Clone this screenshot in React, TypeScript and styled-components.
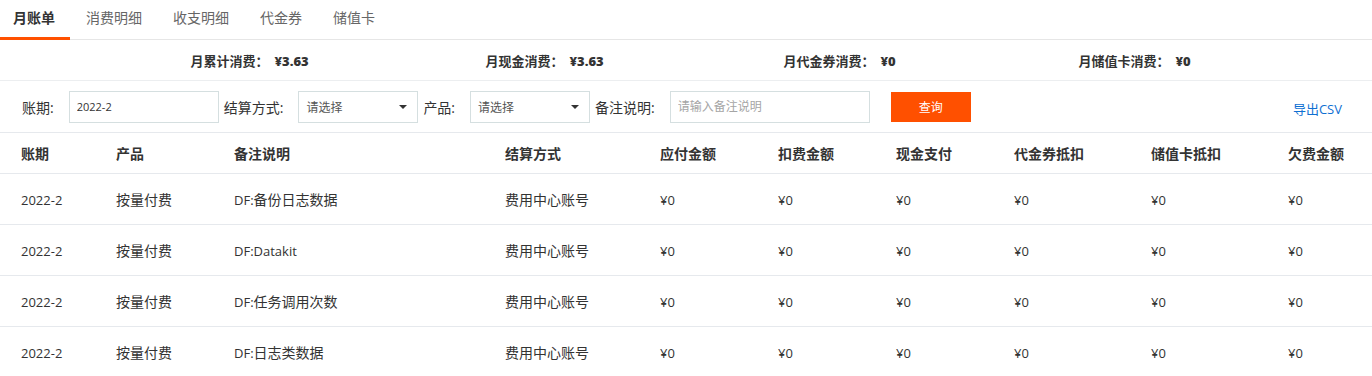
import * as React from "react";
import styled, { createGlobalStyle } from "styled-components";

const GlobalStyle = createGlobalStyle`
  body {
    margin: 0;
    background: #fff;
    font-family: "Open Sans", "Noto Sans CJK SC", sans-serif;
    color: #333;
  }
`;

const Page = styled.div`
  width: 1372px;
  overflow: hidden;
`;

const TabBar = styled.div`
  display: flex;
  height: 40px;
  border-bottom: 1px solid #e6e6e6;
  box-sizing: border-box;
`;

const Tab = styled(({ active, first, ...rest }: any) => <div {...rest} />)`
  display: flex;
  align-items: center;
  padding: 0 15px 3px ${props => (props.first ? "13px" : "15px")};
  margin-right: 1px;
  font-size: 14px;
  color: ${props => (props.active ? "#333" : "#666")};
  font-weight: ${props => (props.active ? 700 : 400)};
  border-bottom: 3px solid ${props => (props.active ? "#ff5000" : "transparent")};
  margin-bottom: -1px;
  cursor: pointer;
`;

const Summary = styled.div`
  display: grid;
  grid-template-columns: repeat(4, 295px);
  padding-left: 102px;
  height: 41px;
  align-items: center;
  border-bottom: 1px solid #eceef0;
  box-sizing: border-box;
`;

const SummaryItem = styled.div`
  text-align: center;
  font-size: 13px;
  font-weight: 700;
  color: #333;

  b {
    margin-left: 6px;
  }
`;

const Filters = styled.div`
  display: flex;
  align-items: center;
  height: 52px;
  padding: 0 30px 0 22px;
  border-bottom: 1px solid #e6e9ed;
  box-sizing: border-box;
`;

const Label = styled.span`
  font-size: 14px;
  color: #333;
  margin-right: 15px;
  white-space: nowrap;
`;

const TextInput = styled(({ w, ...rest }: any) => <input {...rest} />)`
  box-sizing: border-box;
  width: ${props => props.w}px;
  height: 32px;
  border: 1px solid #d5dfe0;
  padding: 0 7px;
  margin-right: 5px;
  font-family: inherit;
  font-size: 11px;
  color: #333;
  outline: none;

  &::placeholder {
    color: #a5a5a5;
    font-size: 12px;
  }
`;

const Select = styled.div`
  box-sizing: border-box;
  width: 120px;
  height: 32px;
  border: 1px solid #d5dfe0;
  padding: 0 10px 0 7px;
  margin-right: 5px;
  display: flex;
  align-items: center;
  justify-content: space-between;
  font-size: 12px;
  color: #555;
`;

const Caret = styled.span`
  width: 0;
  height: 0;
  border-left: 4px solid transparent;
  border-right: 4px solid transparent;
  border-top: 4px solid #333;
`;

const QueryButton = styled.button`
  width: 80px;
  height: 30px;
  margin-left: 16px;
  background: #ff5000;
  border: none;
  color: #fff;
  font-family: inherit;
  font-size: 12px;
  cursor: pointer;
`;

const ExportLink = styled.a`
  margin-left: auto;
  margin-top: 4px;
  font-size: 13px;
  color: #0f6fd2;
  text-decoration: none;
  cursor: pointer;
`;

const columns = "95px 118px 271px 155px 118px 118px 118px 137px 137px 105px";

const Row = styled(({ head, ...rest }: any) => <div {...rest} />)`
  display: grid;
  grid-template-columns: ${columns};
  align-items: center;
  height: ${props => (props.head ? "41px" : "51px")};
  border-bottom: 1px solid #e6e9ed;
  box-sizing: border-box;
  font-size: 14px;
  font-weight: ${props => (props.head ? 700 : 400)};
  color: #333;
`;

const Cell = styled.div`
  padding-left: 21px;
  white-space: nowrap;
`;

// latin runs in the body are a touch smaller than the CJK glyphs
const Latin = styled.span`
  font-size: 13px;
`;

const Mixed = ({ text }: { text: string }) => (
  <>
    {text.split(/([\u4e00-\u9fff]+)/).map((part, i) =>
      !part ? null : /[\u4e00-\u9fff]/.test(part) ? (
        <span key={i}>{part}</span>
      ) : (
        <Latin key={i}>{part}</Latin>
      )
    )}
  </>
);

const tabs = ["月账单", "消费明细", "收支明细", "代金券", "储值卡"];

const summary = [
  ["月累计消费：", "¥3.63"],
  ["月现金消费：", "¥3.63"],
  ["月代金券消费：", "¥0"],
  ["月储值卡消费：", "¥0"]
];

const headers = [
  "账期",
  "产品",
  "备注说明",
  "结算方式",
  "应付金额",
  "扣费金额",
  "现金支付",
  "代金券抵扣",
  "储值卡抵扣",
  "欠费金额"
];

const notes = ["DF:备份日志数据", "DF:Datakit", "DF:任务调用次数", "DF:日志类数据"];

export default function App() {
  return (
    <Page>
      <GlobalStyle />
      <TabBar>
        {tabs.map((t, i) => (
          <Tab key={t} active={i === 0} first={i === 0}>
            {t}
          </Tab>
        ))}
      </TabBar>

      <Summary>
        {summary.map(([label, value]) => (
          <SummaryItem key={label}>
            {label}
            <b>{value}</b>
          </SummaryItem>
        ))}
      </Summary>

      <Filters>
        <Label>账期:</Label>
        <TextInput w={150} defaultValue="2022-2" />
        <Label>结算方式:</Label>
        <Select>
          请选择
          <Caret />
        </Select>
        <Label>产品:</Label>
        <Select>
          请选择
          <Caret />
        </Select>
        <Label>备注说明:</Label>
        <TextInput w={200} placeholder="请输入备注说明" />
        <QueryButton>查询</QueryButton>
        <ExportLink>导出CSV</ExportLink>
      </Filters>

      <Row head>
        {headers.map(h => (
          <Cell key={h}>{h}</Cell>
        ))}
      </Row>
      {notes.map(note => (
        <Row key={note}>
          {["2022-2", "按量付费", note, "费用中心账号", "¥0", "¥0", "¥0", "¥0", "¥0", "¥0"].map(
            (v, i) => (
              <Cell key={i}>
                <Mixed text={v} />
              </Cell>
            )
          )}
        </Row>
      ))}
    </Page>
  );
}
